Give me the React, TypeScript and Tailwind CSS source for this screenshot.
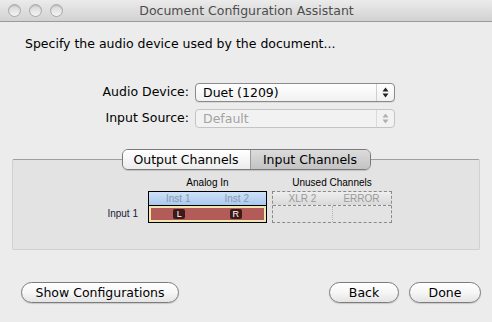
import React from "react";

const font = { fontFamily: '"Lucida Grande", "DejaVu Sans", "Liberation Sans", sans-serif' };
const smallFont = { fontFamily: '"Liberation Sans", Arial, sans-serif' };

function Light() {
  return (
    <div className="w-[13px] h-[13px] rounded-full border border-[#a9a9a9] bg-gradient-to-b from-[#d6d6d6] to-[#f4f4f4] shadow-[inset_0_1px_1px_rgba(0,0,0,0.15)]" />
  );
}

function Arrows({ disabled }: { disabled?: boolean }) {
  const c = disabled ? "#b0b0b0" : "#222";
  return (
    <svg width="7" height="11" viewBox="0 0 7 11">
      <path d="M3.5 0.5 L6.5 4.5 L0.5 4.5 Z" fill={c} />
      <path d="M3.5 10.5 L6.5 6.5 L0.5 6.5 Z" fill={c} />
    </svg>
  );
}

function Popup({ text, disabled }: { text: string; disabled?: boolean }) {
  return (
    <div
      className={`w-[200px] h-[19px] flex rounded-[4px] border ${
        disabled
          ? "border-[#c4c4c4] bg-[#f2f2f2] text-[#a3a3a3]"
          : "border-[#8a8a8a] bg-gradient-to-b from-white to-[#f1f1f1] text-black shadow-[0_1px_0_rgba(0,0,0,0.08)]"
      }`}
    >
      <div className="flex-1 pl-[7px] text-[12.5px] leading-[17px]">{text}</div>
      <div className={`w-[18px] flex items-center justify-center border-l ${disabled ? "border-[#dadada]" : "border-[#cfcfcf]"}`}>
        <Arrows disabled={disabled} />
      </div>
    </div>
  );
}

function Button({ label, w }: { label: string; w: string }) {
  return (
    <div
      className={`${w} h-[21px] rounded-full border border-[#7c7c7c] bg-gradient-to-b from-white via-[#f6f6f6] to-[#e4e4e4] text-[12.5px] leading-[19px] text-center text-black shadow-[0_1px_1px_rgba(0,0,0,0.15)]`}
    >
      {label}
    </div>
  );
}

export default function App() {
  return (
    <div className="w-[492px] h-[322px] bg-[#ececec] flex flex-col overflow-hidden" style={font}>
      {/* Title bar */}
      <div className="h-[22px] flex items-center border-b border-[#9a9a9a] bg-gradient-to-b from-[#ebebeb] to-[#d2d2d2] relative shrink-0">
        <div className="flex gap-[8px] pl-[8px]">
          <Light />
          <Light />
          <Light />
        </div>
        <div className="flex-1 text-center text-[12.5px] text-[#4d4d4d] pr-[62px] leading-[16px]">
          Document Configuration Assistant
        </div>
      </div>

      {/* Heading */}
      <div className="pl-[25px] pt-[14px] text-[12.5px] leading-[16px] text-black">
        Specify the audio device used by the document...
      </div>

      {/* Form */}
      <div className="mt-[31px] grid grid-cols-[189px_200px] gap-x-[6px] gap-y-[7px] items-center">
        <div className="text-right text-[12.5px] text-black">Audio Device:</div>
        <Popup text="Duet (1209)" />
        <div className="text-right text-[12.5px] text-black">Input Source:</div>
        <Popup text="Default" disabled />
      </div>

      {/* Tab group */}
      <div className="mt-[31px] mx-[12px] h-[91px] border border-[#d0d0d0] border-t-[#9e9e9e] bg-[#e3e3e3] rounded-[2px] flex flex-col items-center">
        <div className="-mt-[11px] h-[21px] flex rounded-[6px] border border-[#7a7a7a] overflow-hidden text-[12.5px] leading-[19px] text-black shadow-[0_1px_1px_rgba(0,0,0,0.15)]">
          <div className="w-[128px] text-center bg-gradient-to-b from-white to-[#ececec] border-r border-[#9a9a9a]">
            Output Channels
          </div>
          <div className="w-[119px] text-center bg-gradient-to-b from-[#dcdcdc] to-[#c3c3c3]">
            Input Channels
          </div>
        </div>

        <div className="self-stretch mt-[7px] grid grid-cols-[130px_119px_120px] gap-x-[5px]" style={smallFont}>
          <div />
          <div className="text-center text-[10px] leading-[12px] text-black">Analog In</div>
          <div className="text-center text-[10px] leading-[12px] text-black">Unused Channels</div>

          <div className="flex items-end justify-end pr-[5px] pb-[3px]">
            <span className="text-[10px] leading-[12px] text-[#20203a]">Input 1</span>
          </div>
          <div className="mt-[2px] border border-black">
            <div className="h-[14px] flex bg-gradient-to-b from-[#cfe2f8] to-[#a9c9ef] border-b border-black text-[10px] leading-[14px] text-[#8797ab]">
              <div className="flex-1 text-center">Inst 1</div>
              <div className="flex-1 text-center">Inst 2</div>
            </div>
            <div className="h-[16px] p-[1px] bg-[#e9e4c6]">
              <div className="h-full border border-[#f2ea9a] bg-[#b35b59] flex items-center">
                <div className="flex-1 flex justify-center">
                  <span className="w-[12px] h-[10px] rounded-[2px] bg-[#3b1a1a] text-white text-[9px] leading-[10px] text-center">L</span>
                </div>
                <div className="flex-1 flex justify-center">
                  <span className="w-[12px] h-[10px] rounded-[2px] bg-[#3b1a1a] text-white text-[9px] leading-[10px] text-center">R</span>
                </div>
              </div>
            </div>
          </div>
          <div className="mt-[2px] border border-dashed border-[#8a8a8a]">
            <div className="h-[14px] flex bg-gradient-to-b from-[#eeeeee] to-[#d9d9d9] border-b border-dashed border-[#8a8a8a] text-[10px] leading-[14px] text-[#9a9a9a]">
              <div className="flex-1 text-center">XLR 2</div>
              <div className="flex-1 text-center">ERROR</div>
            </div>
            <div className="h-[16px] flex bg-[#e3e3e3]">
              <div className="flex-1 border-r border-dotted border-[#b5b5b5]" />
              <div className="flex-1" />
            </div>
          </div>
        </div>
      </div>

      {/* Buttons */}
      <div className="mt-[32px] flex pl-[21px] pr-[11px]">
        <Button label="Show Configurations" w="w-[158px]" />
        <div className="flex-1" />
        <Button label="Back" w="w-[70px]" />
        <div className="w-[10px]" />
        <Button label="Done" w="w-[72px]" />
      </div>
    </div>
  );
}
